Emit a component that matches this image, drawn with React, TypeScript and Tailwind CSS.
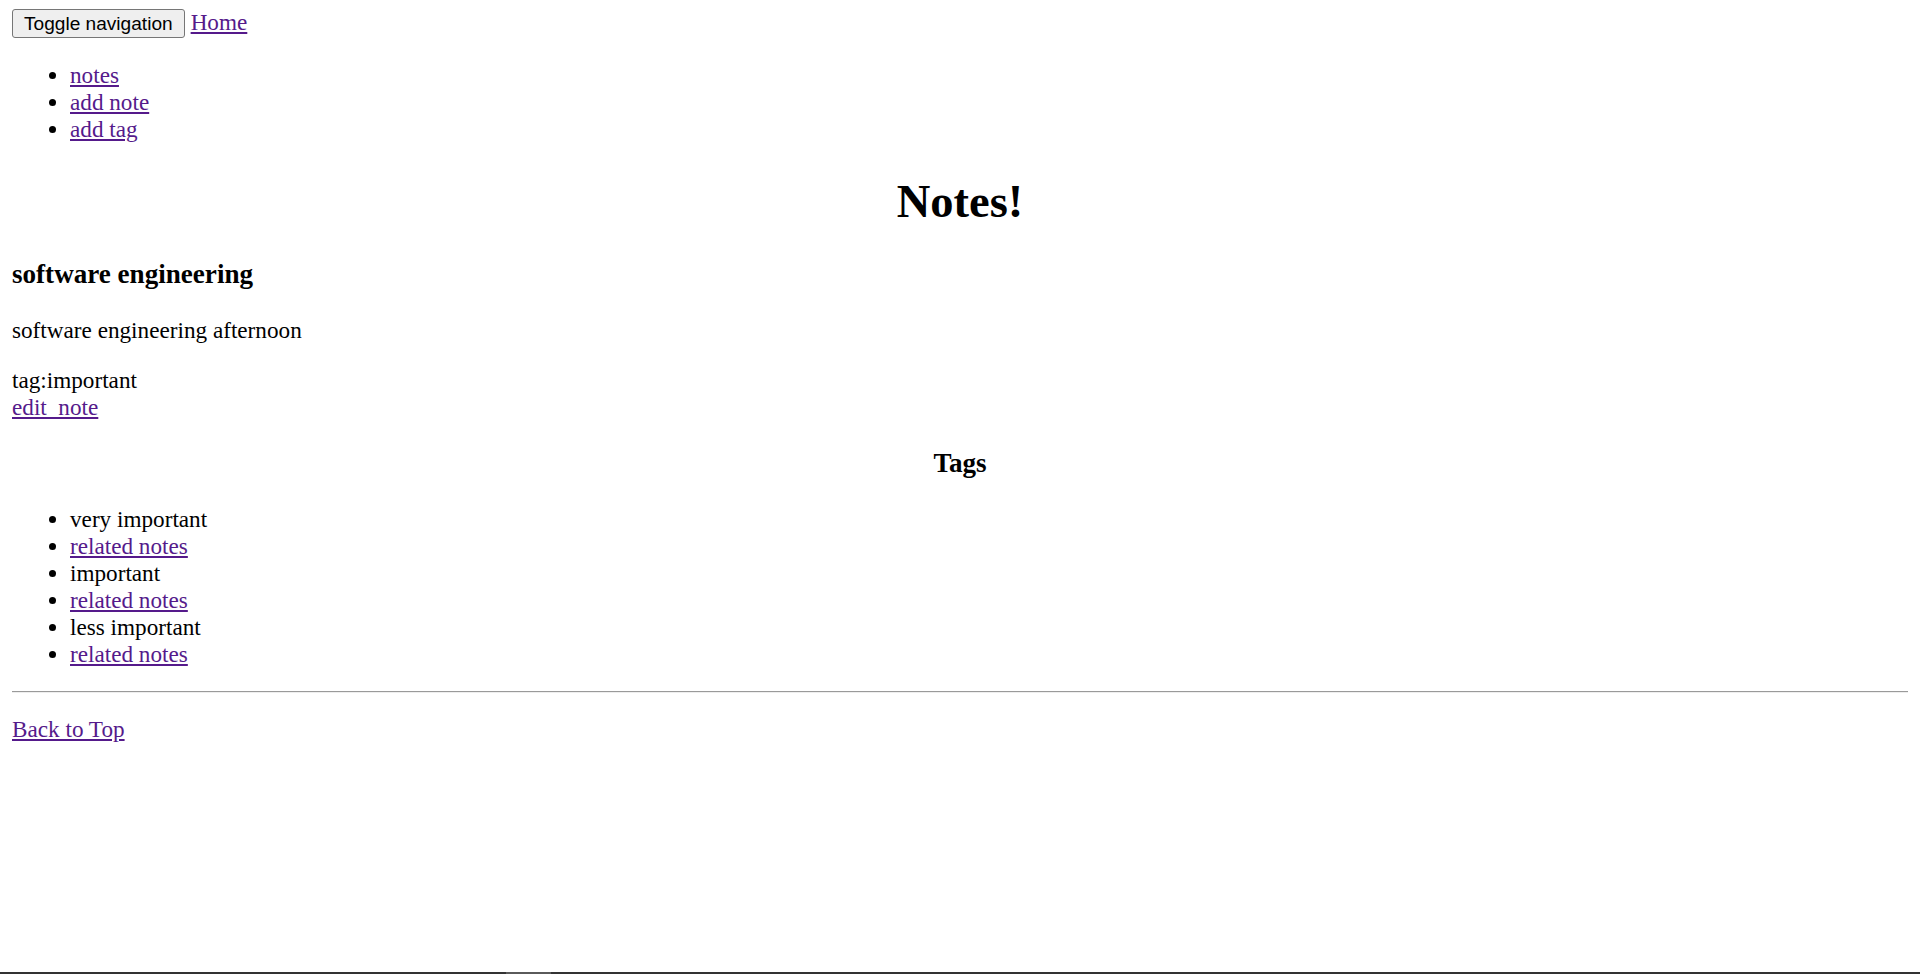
import React from "react";

const linkCls = "text-[#551a8b] underline";

export default function App() {
  return (
    <div className="min-h-[974px] bg-white text-black">
      <div className="px-[12px] font-['Liberation_Serif','Times_New_Roman',serif] text-[23.2px] leading-[27px]">
        <div className="mt-[9px] h-[29px] flex items-baseline gap-[6px]">
          <button className="font-['Liberation_Sans',Arial,sans-serif] text-[19.1px] leading-[23px] px-[11px] py-[2px] border border-[#767676] bg-[#efefef] rounded-[3px] text-black">
            Toggle navigation
          </button>
          <a href="#" className={linkCls}>Home</a>
        </div>
        <ul className="list-disc pl-[58px] mt-[24px]">
          <li><a href="#" className={linkCls}>notes</a></li>
          <li><a href="#" className={linkCls}>add note</a></li>
          <li><a href="#" className={linkCls}>add tag</a></li>
        </ul>
        <h1 className="mt-[32px] text-center font-bold text-[46.5px] leading-[54px]">Notes!</h1>
        <h3 className="mt-[30px] font-bold text-[27.1px] leading-[31px]">software engineering</h3>
        <p className="mt-[27px]">software engineering afternoon</p>
        <div className="mt-[23px]">tag:important</div>
        <div><a href="#" className={linkCls}>edit_note</a></div>
        <h3 className="mt-[27px] text-center font-bold text-[27.1px] leading-[31px]">Tags</h3>
        <ul className="list-disc pl-[58px] mt-[27px]">
          <li>very important</li>
          <li><a href="#" className={linkCls}>related notes</a></li>
          <li>important</li>
          <li><a href="#" className={linkCls}>related notes</a></li>
          <li>less important</li>
          <li><a href="#" className={linkCls}>related notes</a></li>
        </ul>
        <hr className="mt-[23px] h-0 border-0 border-t border-t-[#9a9a9a] border-b border-b-[#eeeeee]" />
        <p className="mt-[23px]"><a href="#" id="top" className={linkCls}>Back to Top</a></p>
      </div>
      <div className="fixed bottom-0 left-0 right-0 h-[2px] bg-[#333333] flex">
        <div className="ml-[506px] w-[45px] h-full bg-[#5a5a5a]" />
      </div>
    </div>
  );
}
